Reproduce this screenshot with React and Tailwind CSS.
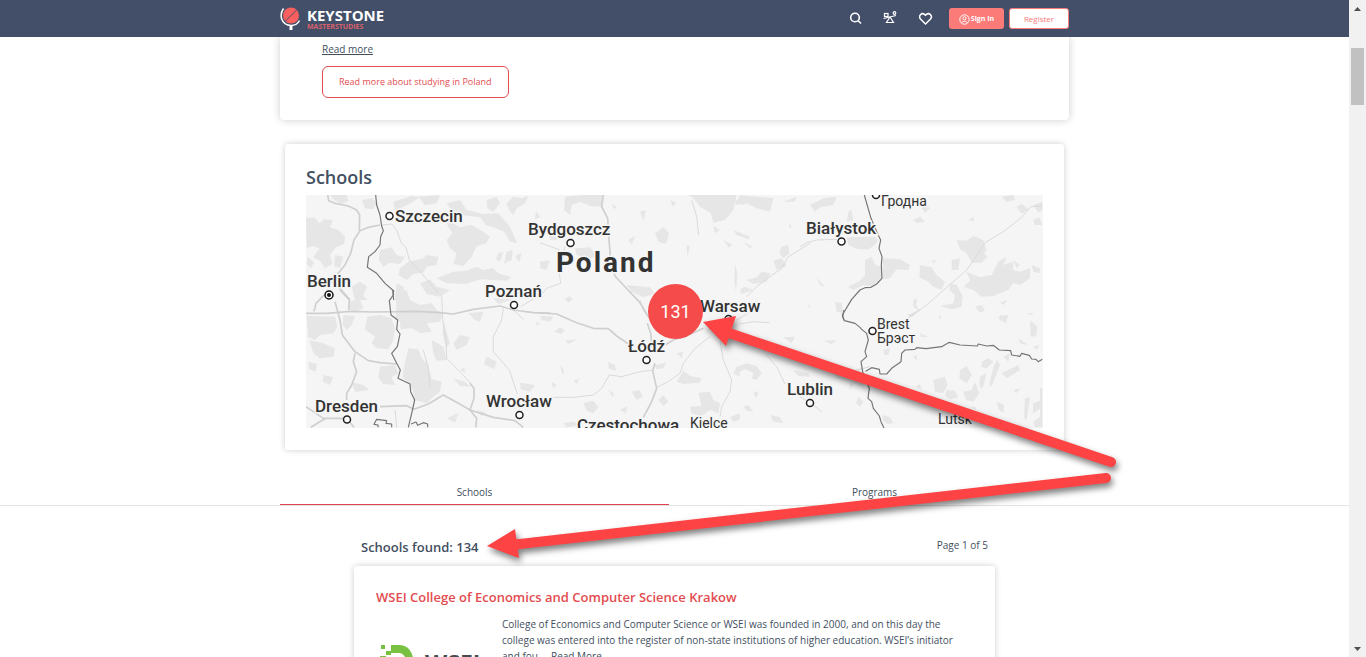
import { useState } from "react";

const FOREST = "#e6e6e6";

// The map is drawn in six tiles, each with its own origin, at a third of their size
const tiles = [
  {
    id: "szczecin",
    transform: "translate(-26 -55) scale(0.33333)",
    forests:
      "M78 235L104 232L118 250L132 238L158 240L150 262L176 270L196 290L192 312L168 322L150 345L158 372L135 385L120 362L100 352L118 325L98 318L80 325Z M165 345L190 350L180 385L162 378Z M84 350L102 368L92 385L80 372Z M150 165L200 165L205 182L185 192L165 182Z M246 180L275 175L290 190L280 208L255 205Z M340 185L395 168L420 172L395 188L345 212Z M415 170L480 165L470 190L435 196Z M500 190L540 180L560 210L610 222L655 220L690 260L712 310L690 305L672 275L640 262L618 255L600 232L545 225L510 205Z M495 235L520 250L540 262L575 255L610 275L630 290L618 310L590 318L575 350L550 378L520 372L530 340L510 325L500 300L518 280L505 262Z M470 415L520 395L560 392L590 380L610 390L640 385L655 400L695 412L680 422L600 418L560 432L500 430Z M360 385L385 365L430 355L440 345L475 350L470 375L440 380L430 398L400 402L380 420L355 405Z M300 330L335 322L350 345L375 352L360 372L330 368L310 380L296 360Z M620 180L650 170L660 190L640 215L622 205Z M680 190L700 170L725 175L745 168L735 190L710 205L700 225L688 212Z M768 212L780 232L765 238Z M655 340L670 335L660 365L648 358Z M680 335L698 330L695 360L672 372Z M705 348L725 338L718 366Z M420 430L450 418L470 440L510 450L480 470L440 462Z M215 440L240 425L262 440L250 465L262 480L225 480Z M350 430L370 440L382 480L345 480Z",
    roads: [
      "M143 165L146 182L165 190L205 198L230 210L239 225L238 270",
      "M300 255L265 262L240 272L222 300L212 340L195 375L150 430",
      "M175 440L210 480",
    ],
    lanes: ["M305 255L335 252L350 270L365 312L378 322L388 360L425 400L475 460"],
    borders: [
      "M287 165L290 195L300 225L305 258L310 272L302 290L300 315L285 335L266 350L262 382L290 400L315 430L338 450L341 480",
    ],
  },
  {
    id: "dresden",
    transform: "translate(-26 95) scale(0.33333)",
    forests:
      "M205 35L240 28L250 55L225 66L208 58Z M345 10L380 0L390 30L420 45L455 40L470 60L490 70L480 95L440 100L455 125L420 130L395 115L362 118L360 95L345 88L350 50Z M80 78L165 80L172 110L160 130L120 135L105 150L85 142Z M262 80L300 75L335 85L345 115L340 150L325 178L290 175L275 160L285 140L255 118Z M88 150L130 160L165 175L160 200L120 205L100 190Z M190 75L225 78L215 105L200 120L188 105Z M385 175L415 178L425 205L445 225L455 268L485 275L480 305L455 325L440 340L405 330L398 300L385 280L368 262L372 230Z M300 230L345 225L355 250L335 262L345 285L310 282L295 262Z M215 275L250 285L268 300L225 306Z M85 215L110 222L108 245L88 238Z M455 150L490 170L500 210L470 212L460 190Z M540 135L570 142L560 165L530 180L520 160Z M490 92L510 160L498 175L488 130Z M620 200L650 215L642 238L612 222Z M720 278L765 285L750 305L722 298Z M520 265L555 275L572 290L540 288Z M590 360L620 368L605 378Z M500 385L535 370L525 398Z M565 70L610 65L600 95L585 90Z M640 25L700 28L655 42Z M130 255L160 262L150 285L128 275Z M765 95L780 100L772 108Z M540 240L552 232L556 248Z M250 340L280 352L260 362Z",
    roads: [
      "M78 70L140 70L210 64L280 66L410 64L480 68L520 72L580 58L660 48L700 60L760 68L810 70",
      "M165 35L180 90L187 135L225 185L265 212L300 218L350 222",
      "M225 190L220 215L230 245L215 285L200 310L200 330",
      "M78 350L130 385L200 385L222 412",
      "M92 412L135 386",
      "M300 350L380 347L402 358L445 342L490 315L535 340L570 360L640 382L705 392L730 412",
      "M570 280L582 295L582 325L570 360L590 385L587 412",
      "M180 0L208 30L206 60",
      "M132 15L108 40L102 64",
    ],
    lanes: [
      "M485 15L488 90L498 150L500 205L540 245L572 280",
      "M670 55L665 90L640 140L640 185L688 240L712 312",
      "M345 360L350 412",
      "M700 60L730 88",
      "M722 50L780 15",
      "M430 180L445 235L450 290",
    ],
    borders: [
      "M341 0L340 15L328 32L333 75L353 90L350 118L360 132L352 170L335 190L350 220L361 240L354 265L390 282L392 305L404 330L395 370L385 412",
      "M335 412L335 402L318 400L320 392L290 388L282 403L294 405L294 412",
      "M393 402L408 396L413 406L430 398L443 402L443 412",
    ],
  },
  {
    id: "bydgoszcz",
    transform: "translate(234 -5) scale(0.33333)",
    forests:
      "M75 20L130 15L190 15L185 50L150 48L120 35L95 45L90 75L72 60Z M445 15L590 15L580 60L555 90L520 98L512 70L480 50L460 25Z M600 15L700 25L690 65L650 55L620 40L585 45Z M345 130L370 112L388 130L378 162L355 155Z M300 65L318 60L310 92Z M265 150L285 138L275 165Z M390 30L408 38L400 52Z M105 175L150 172L170 200L140 205L110 195Z M260 285L330 292L345 310L310 322L275 305Z M75 328L88 318L98 328L86 338Z M520 108L540 120L525 130Z M550 150L578 165L565 172Z M580 120L630 140L625 148L590 135Z M610 155L638 170L630 175Z M725 170L745 165L748 190L730 205L718 190Z M700 212L725 205L740 228L710 240Z M620 270L650 262L665 245L690 250L680 275L640 282Z M585 222L592 250L588 305L583 270Z M745 110L752 102L755 115Z M730 35L770 20L765 35Z M440 165L450 170L442 200Z M580 30L640 28L610 45Z M25 130L60 120L50 150L30 150Z M0 215L30 210L20 240L0 235Z M600 300L612 290L640 300L605 312Z M215 40L230 52L222 58Z",
    roads: [
      "M190 15L185 50L203 85L207 150L213 220L225 258L250 285L300 338L325 380",
    ],
    lanes: [
      "M455 30L470 80L476 135",
      "M810 160L745 200L725 235L690 260L650 290L620 320",
      "M75 170L55 230L62 280L20 295L0 320",
      "M300 330L310 360L330 390",
      "M60 180L0 158",
    ],
    borders: [],
  },
  {
    id: "lodz",
    transform: "translate(234 115) scale(0.33333)",
    forests:
      "M0 18L40 20L30 35L5 30Z M42 65L60 52L75 62L65 72Z M75 92L110 88L85 102Z M205 155L225 165L228 182L205 175Z M60 165L72 180L68 195Z M580 190L590 170L620 160L650 168L665 190L650 210L635 205L640 188L615 178L600 185L598 200Z M410 215L430 182L450 198L485 205L478 218L430 222Z M475 248L510 245L520 270L540 280L535 310L510 300L485 318L455 310L450 290L485 288Z M355 270L370 255L385 275L370 288Z M275 245L300 240L308 260L290 270Z M345 165L380 158L370 175L348 178Z M205 240L222 250L218 262Z M130 280L160 272L175 292L160 310L140 302Z M570 322L600 310L598 330L580 335Z M35 215L50 225L38 235Z M100 212L118 205L110 222Z M410 130L430 125L425 145Z M640 250L655 242L650 265Z M730 82L765 80L755 100Z M690 315L720 322L730 340L700 335Z M610 290L625 285L640 305L620 302Z M760 180L805 190L810 200L775 198Z M70 340L100 335L120 345L80 352Z M240 300L262 288L258 310Z",
    roads: [
      "M0 8L50 12L110 38L160 55L205 56L230 78L270 105",
      "M345 160L338 182L350 235L335 275L310 322",
      "M375 105L400 90L440 78L490 55",
      "M322 40L332 70L335 95",
    ],
    lanes: [
      "M40 262L100 262L160 255L185 235L208 195L245 200L300 185L340 180",
      "M350 232L385 215L420 190L430 160L465 115L510 80",
      "M540 95L550 150L575 210L570 245L545 290L540 320",
      "M680 135L710 170L735 222",
      "M600 42L640 35L688 38",
      "M590 30L640 0",
    ],
    borders: [],
  },
  {
    id: "bialystok",
    transform: "translate(494 -5) scale(0.33333)",
    forests:
      "M30 45L70 25L110 20L100 45L60 52L45 65Z M145 65L155 60L160 90L140 95Z M140 142L225 140L235 150L225 165L205 178L175 178L145 165Z M195 210L215 200L225 225L245 230L245 265L215 290L190 285L160 300L145 290L180 272L195 255Z M248 205L300 208L330 225L325 240L290 238L270 265L250 268Z M360 225L395 232L410 255L435 275L425 300L400 290L385 275L358 262Z M470 150L500 152L520 138L550 150L560 180L552 190L562 200L545 218L515 218L500 190L480 178Z M455 210L480 205L475 240L455 240Z M500 245L540 262L575 255L595 215L620 200L610 225L640 215L640 240L660 245L690 235L690 265L660 285L640 280L625 300L580 318L545 320L520 300L490 290L510 272Z M450 280L470 285L488 318L485 350L455 358L420 348L460 340L465 315L448 300Z M695 225L720 235L722 250L700 245Z M340 90L360 80L375 95L350 100Z M505 90L520 82L522 95Z M605 20L640 15L645 30L620 35Z M650 50L665 42L685 58L665 72Z M700 90L718 82L727 105L705 105Z M105 335L125 340L130 370L110 365Z M50 262L65 280L75 292L60 285Z M340 330L352 325L348 345L360 365L340 350Z M525 350L545 345L555 362L540 368Z M395 210L410 212L400 220Z M600 338L620 330L612 345Z M600 375L625 378L615 390L602 388Z M365 55L380 45L390 55L375 68Z M20 340L30 348L28 355Z M680 370L700 368L695 375Z M700 45L727 35L727 60L715 68Z M640 210L660 225L650 235Z",
    roads: [],
    lanes: [
      "M0 170L20 158L50 150L110 148",
      "M727 48L692 50L665 82L610 125L555 158L525 205L500 240L445 288L380 345L315 390",
    ],
    borders: [
      "M193 15L213 85L232 130L242 150L237 175L246 200L244 225L246 265L230 282L213 292L195 293L180 300L155 328L127 375L132 390",
    ],
  },
  {
    id: "lublin",
    transform: "translate(494 115) scale(0.33333)",
    forests:
      "M400 210L435 200L442 225L430 250L405 245Z M480 180L500 168L515 195L500 220L478 205Z M490 245L515 240L525 215L538 250L520 275L498 270Z M545 155L565 145L580 155L560 175L545 172Z M580 170L592 150L600 165L575 230L568 225Z M605 190L655 165L660 180L620 205Z M610 140L630 130L625 155Z M690 30L712 50L708 80L692 78Z M595 20L625 15L618 40L600 30Z M320 15L355 5L335 22Z M655 85L685 105L660 100Z M700 110L718 105L710 120Z M245 315L270 322L280 340L262 342L250 332Z M175 260L190 275L180 290L168 280Z M90 170L150 175L195 200L190 230L150 215L110 205Z M675 265L690 262L680 330L672 325Z M700 280L725 270L727 290L698 312Z M360 70L385 80L362 82Z M70 92L110 90L95 102Z M250 120L270 115L265 135L252 135Z M340 140L350 135L352 155Z M720 235L727 235L727 352L705 352L700 335L720 320Z M590 275L612 285L610 310L596 298Z M440 240L465 242L475 262L450 268L435 258Z M415 15L425 20L418 28Z M510 290L530 292L525 300Z M640 240L660 235L650 250Z M345 230L360 222L365 240Z M540 200L560 190L548 235L538 232Z M150 215L160 225L150 238Z",
    roads: [],
    lanes: ["M0 260L40 285L65 305", "M300 45L340 10L360 0", "M130 190L210 170"],
    borders: [
      "M132 0L128 20L133 32L165 40L180 52L185 58L200 70L205 90L195 125L200 140L183 155L188 185L200 215L208 235L204 265L215 275L220 295L238 318L243 335L252 354",
      "M197 184L215 173L238 178L240 192L260 192L275 175L303 155L305 130L315 120L345 118L350 113L378 116L425 110L448 97L480 105L532 108L535 102L560 108L580 106L598 120L632 122L635 135L660 139L665 130L688 136L695 147L708 148L715 155L727 148",
    ],
  },
];

const cities = [
  { name: "Szczecin", x: 89, y: 27, dot: [83.5, 21] },
  { name: "Bydgoszcz", x: 222, y: 40, dot: [264.5, 48] },
  { name: "Poznań", x: 179, y: 102, dot: [208, 110] },
  { name: "Warsaw", x: 394, y: 117, dot: [422.5, 124] },
  { name: "Białystok", x: 500, y: 39, dot: [535.5, 46.5] },
  { name: "Łódź", x: 322, y: 157, dot: [340.5, 165] },
  { name: "Wrocław", x: 180, y: 212, dot: [213.5, 220] },
  { name: "Lublin", x: 481, y: 200, dot: [504, 208] },
  { name: "Dresden", x: 9, y: 217, dot: [41, 224.5] },
  { name: "Częstochowa", x: 271, y: 236 },
];

const towns = [
  { name: "Гродна", x: 575, y: 11, dot: [570, 0] },
  { name: "Brest", x: 571, y: 134, dot: [566.5, 136] },
  { name: "Брэст", x: 571, y: 148 },
  { name: "Kielce", x: 384, y: 233 },
  { name: "Lutsk", x: 632, y: 229 },
];

function CityDot({ at }) {
  return (
    <circle cx={at[0]} cy={at[1]} r="3.5" fill="#fff" stroke="#222" strokeWidth="1.5" />
  );
}

function SchoolsMap() {
  return (
    <div className="relative overflow-hidden bg-[#f5f5f5]">
      <svg
        viewBox="0 0 737 233"
        className="block w-full"
        role="img"
        aria-label="Map of schools in Poland"
      >
        {tiles.map((tile) => (
          <g key={tile.id} transform={tile.transform}>
            <path d={tile.forests} fill={FOREST} />
          </g>
        ))}
        {tiles.map((tile) => (
          <g
            key={tile.id}
            transform={tile.transform}
            fill="none"
            strokeLinejoin="round"
          >
            {tile.lanes.map((d) => (
              <path key={d} d={d} stroke="#dadada" strokeWidth="3" />
            ))}
            {tile.roads.map((d) => (
              <path key={d} d={d} stroke="#cfcfcf" strokeWidth="5" />
            ))}
            {tile.borders.map((d) => (
              <path key={d} d={d} stroke="#757575" strokeWidth="3.5" />
            ))}
          </g>
        ))}

        <g
          fill="#333"
          stroke="#f5f5f5"
          strokeWidth="3"
          paintOrder="stroke"
          className="font-['Roboto',sans-serif]"
        >
          <g className="text-[17px] font-medium">
            {cities.map((c) => (
              <text key={c.name} x={c.x} y={c.y}>
                {c.name}
              </text>
            ))}
            <text x="1" y="92">
              Berlin
            </text>
          </g>
          <g className="text-[14px]">
            {towns.map((t) => (
              <text key={t.name} x={t.x} y={t.y}>
                {t.name}
              </text>
            ))}
          </g>
          <text x="250" y="77" className="text-[28px] font-bold tracking-[2px]">
            Poland
          </text>
        </g>

        {[...cities, ...towns].map((c) => c.dot && <CityDot key={c.name} at={c.dot} />)}
        <circle cx="23" cy="100" r="4" fill="#fff" stroke="#111" strokeWidth="1.5" />
        <circle cx="23" cy="100" r="2" fill="#111" />
      </svg>

      <button
        type="button"
        className="absolute left-[342px] top-[89px] size-[55px] rounded-full bg-[#f54b4b] font-['Roboto',sans-serif] text-[18px] text-white"
      >
        131
      </button>
    </div>
  );
}

function KeystoneLogo() {
  return (
    <a href="#" className="flex items-center gap-[6px]">
      <svg width="21" height="25" viewBox="0 0 21 25" fill="none" aria-hidden="true">
        <circle cx="11" cy="9.500" r="8" fill="#f9605f" />
        <path d="M5 15.500L17 3.500" stroke="#434f68" strokeWidth="1" />
        <path d="M3.500 2.500C-1 9 1 19 11 19.500C15 19.600 18 17.500 19.500 14.500" stroke="#fff" strokeWidth="1.500" />
        <path d="M11 19.500V24" stroke="#fff" strokeWidth="3" />
      </svg>
      <span className="flex flex-col">
        <span className="text-[15px] leading-4 font-bold text-white">KEYSTONE</span>
        <span className="text-[7px] leading-[8px] font-bold text-[#d8606b]">MASTERSTUDIES</span>
      </span>
    </a>
  );
}

function Header() {
  return (
    <header className="relative z-10 h-[37px] bg-[#434f68]">
      <div className="mx-auto flex h-full max-w-[789px] items-center justify-between">
        <KeystoneLogo />
        <div className="flex items-center">
          <nav className="mr-4 flex items-center gap-5 text-white">
            <button type="button" aria-label="Search">
              <svg width="14" height="14" viewBox="0 0 14 14" fill="none" stroke="currentColor" strokeWidth="1.600">
                <circle cx="6" cy="5.500" r="4.300" />
                <path d="M9.200 8.700L12 11.500" />
              </svg>
            </button>
            <button type="button" aria-label="Compare">
              <svg width="16" height="16" viewBox="0 0 16 16" fill="none" stroke="currentColor" strokeWidth="1.200">
                <rect x="1.500" y="2.500" width="3.500" height="3" />
                <circle cx="11.500" cy="2" r="1.300" />
                <path d="M0.500 7.500L13 4.500M7 6L10.500 11.500H3.500Z" />
              </svg>
            </button>
            <button type="button" aria-label="Favourites">
              <svg width="14" height="14" viewBox="0 0 14 14" fill="none" stroke="currentColor" strokeWidth="1.500">
                <path d="M6.500 12L1.500 7C-1 4.300 2.500 -0.200 5.800 2.600L6.500 3.300L7.200 2.600C10.500 -0.200 14 4.300 11.500 7Z" />
              </svg>
            </button>
          </nav>
          <button
            type="button"
            className="mr-[5px] flex h-[21px] w-[55px] items-center justify-center gap-px rounded-[3px] bg-[#fb7b79] pt-px text-[7px] font-bold text-white"
          >
            <svg width="11" height="11" viewBox="0 0 11 11" fill="none" stroke="currentColor">
              <circle cx="5.500" cy="5.500" r="4.700" />
              <circle cx="5.500" cy="4.300" r="1.600" />
              <path d="M2.500 8.800C3.500 6.800 7.500 6.800 8.500 8.800" />
            </svg>
            Sign In
          </button>
          <button
            type="button"
            className="flex h-[21px] w-[60px] items-center justify-center rounded-[3px] border border-[#fb7b79] bg-white pt-px text-[8px] text-[#fb7b79]"
          >
            Register
          </button>
        </div>
      </div>
    </header>
  );
}

function Tabs() {
  const [active, setActive] = useState("Schools");

  return (
    <div className="mt-[30px] border-b border-[#e3e3e3]">
      <div role="tablist" className="mx-auto grid max-w-[789px] grid-cols-2 gap-[11px]">
        {["Schools", "Programs"].map((tab) => (
          <button
            key={tab}
            type="button"
            role="tab"
            aria-selected={active === tab}
            onClick={() => setActive(tab)}
            className={`h-[25px] border-b text-[10px] ${
              active === tab ? "border-[#e0434d]" : "border-transparent"
            }`}
          >
            {tab}
          </button>
        ))}
      </div>
    </div>
  );
}

function SchoolCard() {
  return (
    <article className="rounded-[3px] bg-white px-[22px] pt-[21px] shadow-[0_0_6px_rgba(0,0,0,0.2)]">
      <h3 className="text-[13px] leading-5 font-semibold text-[#e34c50]">
        <a href="#">WSEI College of Economics and Computer Science Krakow</a>
      </h3>
      <div className="mt-[9px] flex">
        <div className="w-[126px] shrink-0 pt-[29px] pl-1">
          <svg width="110" height="36" viewBox="0 0 110 36" aria-hidden="true">
            <path d="M1 0H5V4H1ZM6 6H11V10H6ZM0 11H6V16H0Z" fill="#79c143" />
            <path d="M11 0H19C38 0 38 32 19 32H8V12H15V24H19C28 24 28 8 19 8H11Z" fill="#79c143" />
            <text
              x="45"
              y="27"
              fill="#4a4a4c"
              className="font-['Open_Sans',sans-serif] text-[23px] font-bold"
            >
              WSEI
            </text>
          </svg>
        </div>
        <p className="text-[10px] leading-4">
          College of Economics and Computer Science or WSEI was founded in 2000, and on this day the
          college was entered into the register of non-state institutions of higher education. WSEI’s
          initiator and fou...&nbsp;{" "}
          <a href="#" className="underline">
            Read More
          </a>
        </p>
      </div>
    </article>
  );
}

function Arrow({ shaft, head }) {
  return (
    <g>
      <path d={shaft} stroke="#fd4343" strokeWidth="10" strokeLinecap="round" />
      <path d={head} fill="#fd4343" />
    </g>
  );
}

function Scrollbar() {
  return (
    <div className="flex w-[17px] shrink-0 flex-col bg-[#f1f1f1]" aria-hidden="true">
      <svg width="17" height="17" viewBox="0 0 17 17" fill="#505050">
        <path d="M5 11H12L8.500 7Z" />
      </svg>
      <div className="mx-[2px] mt-[31px] h-[57px] bg-[#c1c1c1]" />
      <svg className="mt-auto" width="17" height="17" viewBox="0 0 17 17" fill="#505050">
        <path d="M5 7H12L8.500 11Z" />
      </svg>
    </div>
  );
}

export default function App() {
  return (
    <div className="flex h-screen overflow-hidden bg-white font-['Open_Sans',sans-serif] text-[#434f5f]">
      <div className="relative min-w-0 flex-1 overflow-hidden">
        <Header />

        <main>
          <section className="mx-auto max-w-[789px] rounded-b-[4px] bg-white px-[42px] pt-1 pb-[22px] shadow-[0_0_8px_rgba(0,0,0,0.2)]">
            <a href="#" className="block text-[10px] leading-4 underline">
              Read more
            </a>
            <button
              type="button"
              className="mt-[9px] block h-8 rounded-[6px] border border-[#e34c50] px-4 text-[9px] text-[#e34c50]"
            >
              Read more about studying in Poland
            </button>
          </section>

          <section className="mx-auto mt-6 max-w-[779px] rounded-[3px] bg-white px-[21px] pt-[21px] pb-[22px] shadow-[0_0_6px_rgba(0,0,0,0.2)]">
            <h2 className="mb-[6px] text-[18px] leading-6 font-semibold">Schools</h2>
            <SchoolsMap />
          </section>

          <Tabs />

          <section className="mx-auto max-w-[641px]">
            <div className="flex h-[60px] items-center justify-between px-[7px] pt-[22px]">
              <h2 className="text-[13px] leading-5 font-semibold">Schools found: 134</h2>
              <p className="pb-1 text-[10px] leading-4">Page 1 of 5</p>
            </div>
            <SchoolCard />
          </section>
        </main>

        {/* Arrows pointing from the counts to the same spot on the right */}
        <svg
          className="pointer-events-none absolute top-[300px] left-1/2 z-20 -ml-[194px] drop-shadow-[2px_4px_3px_rgba(0,0,0,0.5)]"
          width="650"
          height="280"
          viewBox="0 0 650 280"
          fill="none"
          aria-hidden="true"
        >
          <Arrow shaft="M245 32L630 162" head="M222 22L255 16L245 46Z" />
          <Arrow shaft="M30 245L625 178" head="M6 246L34 229L38 258Z" />
        </svg>
      </div>
      <Scrollbar />
    </div>
  );
}
